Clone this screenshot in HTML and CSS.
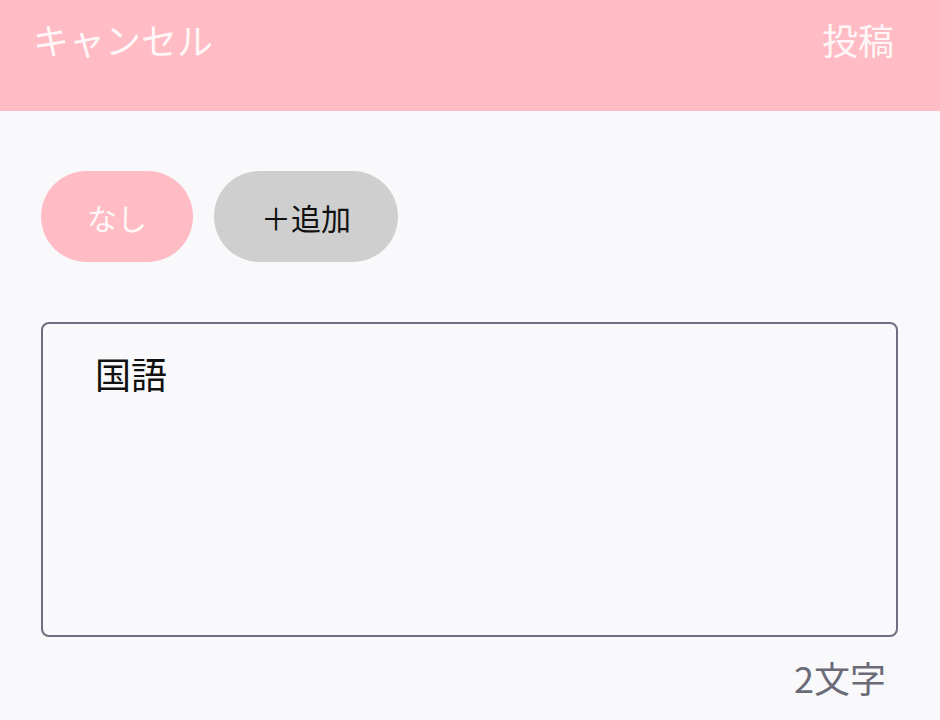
FILE: index.html
```html
<!DOCTYPE html>
<html lang="ja">
<head>
    <meta charset="UTF-8">
    <meta name="viewport" content="width=device-width, initial-scale=1.0">
    <title>投稿</title>
    <link rel="stylesheet" href="styles.css">
</head>
<body>
    <header class="top-bar">
        <span class="top-link">キャンセル</span>
        <span class="top-link">投稿</span>
    </header>

    <main class="content">
        <div class="tags">
            <span class="tag tag-none">なし</span>
            <span class="tag tag-add">＋追加</span>
        </div>

        <div class="editor">
            <div class="editor-text">国語</div>
        </div>
        <div class="counter">2文字</div>
    </main>
</body>
</html>
```

FILE: styles.css
```css
body {
    margin: 0;
    background: #f9f9fb;
    font-family: "Noto Sans CJK JP", "Noto Sans", sans-serif;
    width: 940px;
    height: 720px;
    overflow: hidden;
}
.top-bar {
    background: #ffbcc4;
    height: 111px;
    box-sizing: border-box;
    padding: 0 46px 34px 33px;
    display: flex;
    justify-content: space-between;
    align-items: center;
}
.top-link {
    color: #fff6f7;
    font-size: 36px;
}
.content {
    padding: 60px 42px 0 41px;
}
.tags {
    display: flex;
    gap: 21px;
}
.tag {
    height: 91px;
    border-radius: 46px;
    display: flex;
    align-items: center;
    justify-content: center;
    font-size: 30px;
}
.tag-none {
    width: 152px;
    background: #ffbcc4;
    color: #fff6f7;
}
.tag-add {
    width: 184px;
    background: #cfcfcf;
    color: #111;
}
.editor {
    margin-top: 60px;
    height: 315px;
    box-sizing: border-box;
    border: 2px solid #6f6e80;
    border-radius: 8px;
    padding: 23px 52px;
}
.editor-text {
    font-size: 36px;
    color: #111;
}
.counter {
    text-align: right;
    padding: 14px 12px 0 0;
    font-size: 36px;
    color: #6b6b78;
}
```
